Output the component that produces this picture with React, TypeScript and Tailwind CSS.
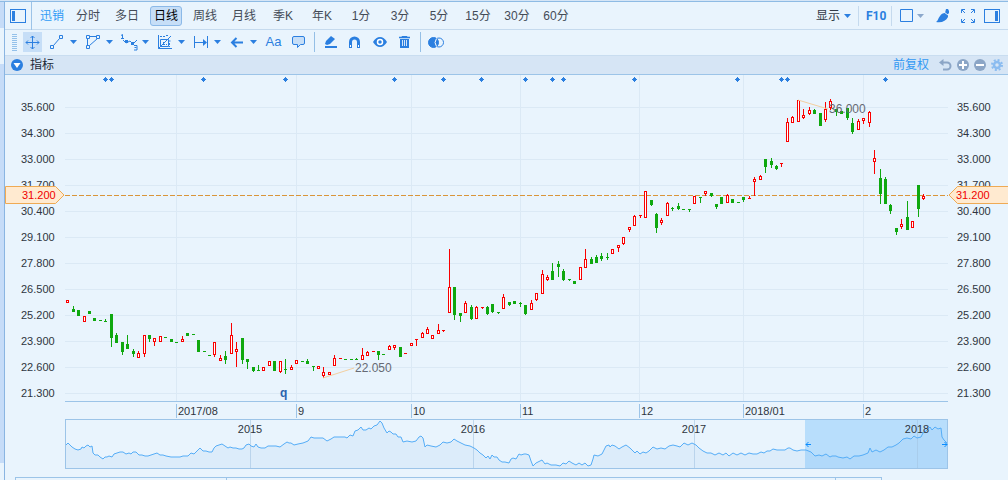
import React from 'react';

type Candle = [kind: 'R' | 'G', high: number, top: number, bottom: number, low: number];

// Daily bars in chart units: direction, high, body top, body bottom, low
const CANDLES: Candle[] = [
  ['R', 300, 300, 303, 303], ['G', 306, 309, 312, 312], ['G', 310, 310, 316, 316], ['R', 316, 316, 322, 322],
  ['G', 311, 311, 314, 314], ['G', 318, 318, 321, 321], ['G', 320, 320, 321, 321], ['G', 319, 321, 322, 322],
  ['G', 314, 314, 338, 347], ['G', 333, 335, 343, 343], ['G', 342, 342, 352, 355], ['G', 335, 344, 349, 349],
  ['G', 349, 351, 354, 357], ['R', 351, 353, 358, 358], ['R', 335, 335, 354, 357], ['G', 335, 335, 339, 342],
  ['R', 338, 338, 342, 346], ['R', 336, 336, 342, 342], ['G', 337, 337, 338, 338], ['G', 339, 339, 342, 342],
  ['G', 342, 342, 343, 343], ['R', 336, 339, 342, 342], ['G', 333, 333, 336, 336], ['G', 334, 334, 335, 335],
  ['G', 340, 340, 352, 352], ['G', 351, 351, 352, 352], ['G', 355, 355, 356, 356], ['R', 342, 342, 355, 357],
  ['R', 355, 358, 361, 361], ['G', 351, 356, 360, 364], ['R', 323, 335, 354, 354], ['R', 342, 349, 352, 367],
  ['G', 338, 338, 360, 364], ['G', 359, 359, 362, 369], ['G', 367, 367, 371, 372], ['G', 365, 370, 371, 371],
  ['R', 367, 367, 371, 371], ['R', 361, 361, 366, 366], ['G', 361, 361, 371, 371], ['R', 361, 361, 372, 373],
  ['G', 359, 369, 370, 374], ['R', 365, 367, 370, 370], ['R', 360, 360, 364, 364], ['G', 361, 361, 362, 362],
  ['G', 359, 361, 364, 364], ['G', 366, 366, 367, 371], ['R', 366, 366, 369, 369], ['R', 367, 372, 376, 378],
  ['R', 372, 372, 375, 375], ['R', 355, 358, 366, 366], ['R', 358, 358, 359, 359], ['G', 359, 359, 360, 360],
  ['G', 359, 359, 360, 360], ['G', 358, 359, 360, 360], ['R', 348, 355, 360, 360], ['R', 351, 352, 356, 356],
  ['R', 351, 351, 352, 352], ['G', 351, 351, 355, 360], ['G', 354, 354, 355, 355], ['R', 345, 346, 350, 350],
  ['R', 345, 345, 348, 350], ['G', 347, 347, 357, 357], ['R', 353, 353, 354, 354], ['R', 343, 343, 346, 346],
  ['R', 339, 339, 340, 346], ['R', 332, 333, 338, 338], ['R', 327, 329, 334, 334], ['R', 335, 335, 339, 339],
  ['R', 324, 330, 334, 334], ['R', 330, 330, 331, 332], ['R', 249, 287, 313, 313], ['G', 287, 287, 315, 320],
  ['G', 313, 313, 316, 322], ['R', 301, 303, 313, 313], ['G', 305, 307, 319, 320], ['R', 306, 307, 319, 319],
  ['R', 307, 307, 308, 309], ['G', 306, 307, 314, 315], ['G', 304, 304, 312, 313], ['G', 312, 312, 313, 314],
  ['R', 294, 297, 309, 309], ['G', 302, 302, 305, 306], ['G', 301, 301, 304, 304], ['G', 302, 303, 304, 307],
  ['G', 305, 305, 314, 315], ['R', 300, 303, 310, 310], ['R', 293, 293, 300, 301], ['R', 270, 274, 294, 294],
  ['R', 275, 277, 280, 281], ['G', 263, 271, 280, 280], ['G', 261, 264, 267, 277], ['G', 269, 271, 280, 281],
  ['G', 279, 279, 280, 281], ['G', 281, 281, 284, 284], ['R', 267, 267, 280, 280], ['R', 249, 259, 268, 268],
  ['G', 257, 259, 264, 264], ['G', 255, 257, 263, 263], ['G', 253, 256, 259, 261], ['G', 253, 257, 258, 260],
  ['R', 249, 249, 254, 254], ['R', 245, 245, 248, 252], ['R', 237, 237, 244, 245], ['R', 227, 227, 230, 232],
  ['R', 215, 216, 226, 226], ['R', 215, 215, 216, 218], ['R', 191, 191, 218, 218], ['G', 200, 200, 205, 206],
  ['G', 213, 214, 228, 233], ['R', 218, 220, 223, 225], ['R', 202, 203, 216, 216], ['G', 207, 208, 209, 211],
  ['G', 203, 206, 209, 210], ['G', 209, 209, 210, 210], ['G', 209, 209, 210, 212], ['R', 196, 196, 204, 204],
  ['G', 197, 197, 198, 203], ['R', 191, 191, 194, 196], ['G', 193, 193, 196, 197], ['G', 204, 204, 207, 209],
  ['G', 197, 197, 204, 204], ['R', 194, 195, 203, 203], ['G', 199, 199, 203, 203], ['G', 202, 202, 203, 203],
  ['G', 197, 197, 200, 202], ['R', 196, 198, 199, 199], ['R', 177, 179, 182, 196], ['R', 175, 176, 180, 180],
  ['G', 159, 159, 167, 173], ['G', 158, 161, 165, 168], ['G', 165, 166, 169, 170], ['R', 163, 163, 164, 167],
  ['R', 118, 122, 142, 142], ['R', 116, 117, 123, 123], ['R', 100, 100, 122, 122], ['R', 109, 115, 118, 119],
  ['R', 107, 110, 114, 115], ['G', 109, 110, 114, 114], ['G', 113, 113, 126, 126], ['R', 102, 109, 120, 122],
  ['R', 99, 101, 108, 110], ['G', 109, 109, 112, 116], ['G', 111, 111, 114, 114], ['G', 108, 108, 118, 120],
  ['G', 118, 123, 132, 134], ['R', 119, 121, 130, 130], ['R', 118, 118, 121, 124], ['R', 111, 112, 123, 127],
  ['R', 150, 158, 162, 174], ['G', 169, 178, 194, 204], ['G', 177, 179, 204, 204], ['G', 204, 205, 211, 214],
  ['G', 228, 228, 232, 235], ['R', 219, 224, 227, 229], ['G', 201, 217, 230, 230], ['R', 221, 221, 228, 228],
  ['G', 185, 185, 209, 217], ['R', 194, 196, 199, 200],
];

const PRICES = ['35.600', '34.300', '33.000', '31.700', '30.400', '29.100', '27.800', '26.500', '25.200', '23.900', '22.600', '21.300'];
const EVENTS = [105, 111, 203, 285, 394, 443, 481, 525, 552, 563, 634, 737, 781, 787, 885];
const PERIODS = ['分时', '多日', '日线', '周线', '月线', '季K', '年K', '1分', '3分', '5分', '15分', '30分', '60分'];

const LEFT = 65;
const WIDTH = 883;

const MONTHS = [
  { label: '2017/08', x: 176 },
  { label: '9', x: 296 },
  { label: '10', x: 411 },
  { label: '11', x: 520 },
  { label: '12', x: 639 },
  { label: '2018/01', x: 743 },
  { label: '2', x: 863 },
];

const YEARS = [
  { label: '2015', x: 250 },
  { label: '2016', x: 473 },
  { label: '2017', x: 694 },
  { label: '2018', x: 917 },
];

const HISTORY =
  '66,445 68,443 70,445 72,447 75,449 78,450 81,449 82,447 84,448 86,446 88,445 90,447 92,446 93,453 95,455 98,455 100,457 103,459 105,457 107,457 109,456 112,457 114,454 117,453 120,452 123,452 126,454 129,453 131,454 133,452 136,452 139,455 142,455 145,456 148,456 151,455 154,454 157,453 160,455 163,455 166,456 171,457 176,457 180,457 183,456 188,456 191,453 194,454 197,451 200,448 203,451 206,451 209,452 212,452 214,448 216,446 219,445 222,444 225,446 228,448 230,447 233,448 236,448 239,449 242,449 244,448 246,445 249,444 251,446 254,447 256,444 258,447 261,448 265,448 268,446 272,446 276,446 280,447 284,444 287,442 289,443 291,443 294,445 298,444 303,443 308,441 311,437 314,438 318,438 323,438 327,441 331,439 334,437 339,437 345,437 347,438 350,435 353,436 355,431 358,430 361,427 363,430 366,430 369,428 371,429 374,426 377,425 380,421 382,423 384,428 387,433 389,431 391,432 393,434 396,434 398,437 401,437 403,442 407,441 412,442 416,441 419,437 421,436 423,438 425,447 427,445 431,446 436,447 440,445 443,442 447,443 451,442 454,439 457,441 461,443 465,445 470,446 474,448 477,450 480,453 483,455 486,458 488,456 490,459 492,455 494,457 497,457 499,460 502,462 505,462 509,463 511,459 513,458 516,459 519,454 521,455 524,454 526,454 529,455 531,461 533,466 536,463 540,461 542,460 545,464 547,463 551,465 556,465 560,466 563,463 566,464 569,461 572,463 576,465 579,463 582,465 585,463 588,466 591,465 593,459 594,455 598,456 602,454 604,450 606,446 609,445 610,447 612,445 615,446 619,449 622,447 626,445 630,448 633,451 635,453 637,451 640,454 643,452 646,453 649,451 653,447 657,449 661,448 665,449 669,446 673,445 677,446 680,447 684,443 688,445 692,443 696,445 699,448 703,451 707,453 711,453 715,455 719,453 723,455 726,453 729,456 733,453 737,455 741,453 745,455 749,453 753,454 757,454 761,452 764,453 767,451 770,451 773,449 777,450 781,450 785,450 788,448 790,448 793,450 797,451 801,450 806,450 811,452 815,456 819,455 822,456 826,454 830,457 832,456 834,456 836,456 838,457 843,458 847,457 850,459 854,456 859,456 863,455 868,453 870,448 872,452 876,450 880,452 884,450 888,447 892,447 896,445 899,443 903,439 907,438 911,439 914,436 917,438 921,437 923,433 926,431 930,427 932,430 935,427 938,429 941,428 942,437 944,440 946,442 947,443';

const pct = (x: number) => `${((x - LEFT) / WIDTH) * 100}%`;
const candleX = (i: number) => Math.round(67.2 + i * 5.452);

const Caret = ({ muted = false }: { muted?: boolean }) => (
  <svg width="7" height="4" viewBox="0 0 7 4" className={muted ? 'shrink-0 text-[#8ba8cc]' : 'shrink-0 text-[#2b7fe0]'}>
    <path d="M0 0h7L3.5 4z" fill="currentColor" />
  </svg>
);

const Glyph = ({ children, size = 18 }: { children: React.ReactNode; size?: number }) => (
  <svg width={size} height={size} viewBox={`0 0 ${size} ${size}`} fill="none" stroke="currentColor" className="shrink-0">
    {children}
  </svg>
);

const PanelIcon = ({ side }: { side: 'left' | 'right' }) => (
  <svg width="16" height="14" viewBox="0 0 16 14" fill="none" className="text-[#2b7fe0]">
    <rect x="0.5" y="0.5" width="15" height="13" stroke="currentColor" />
    <rect x={side === 'left' ? 2 : 11} y="2" width="3" height="10" fill="currentColor" />
  </svg>
);

const DRAW_TOOLS = [
  {
    name: 'Line',
    icon: <path d="M1.5 12.5h3v3h-3zM10.5 2.5h3v3h-3zM4.5 12.5l6-7" />,
  },
  {
    name: 'Polygon',
    icon: <path d="M1.5 2.5h3v3h-3zM11.5 2.5h3v3h-3zM1.5 12.5h3v3h-3zM4.5 3.5h7M2.5 5.5v7M4.5 12.5l8-7" />,
  },
  {
    name: 'Wave',
    icon: (
      <>
        <path d="M0 2.5l1.5-1v4M0 5.5h3M2 7l3 3 4-2 3 3 4-4" />
        <path d="M4 7h3v3H4zM10 9h3v3h-3z" fill="currentColor" stroke="none" />
        <path d="M13 12.5h3v4.500h-3M13.500 14.500h2" />
      </>
    ),
  },
  {
    name: 'Gann',
    icon: (
      <>
        <path d="M1.5 2v13.5H15M3.5 6.5h8v7h-8zM1.5 15.5L14 3" />
        <path d="M3 3.500h5M6 9.500h2M6 11.500h4M11.500 8h3M12.500 10v4M9 2.500h2" strokeDasharray="2 1" />
      </>
    ),
  },
  {
    name: 'Measure',
    icon: (
      <>
        <path d="M1.5 3v12M14.5 3v12M2 9.5h10" />
        <path d="M10 6l4 3.5-4 3.5z" fill="currentColor" stroke="none" />
      </>
    ),
  },
  {
    name: 'Arrow',
    icon: <path d="M14 9.5H3M7.5 5l-4.500 4.500L7.500 14" strokeWidth="2" />,
  },
];

const QuoteBar = () => (
  <header className="flex h-7 items-center border-b border-[#c5daee] text-[#444b57]">
    <button aria-label="Toggle sidebar" className="ml-[5px]"><PanelIcon side="left" /></button>
    <span className="ml-[5px] h-7 w-px bg-[#9cc3e8]" />
    <a href="#quote" className="ml-2 text-[#2f9af5]">迅销</a>
    <nav className="ml-2 flex gap-[7px]">
      {PERIODS.map((period) => (
        <button
          key={period}
          className={
            period === '日线'
              ? 'h-5 w-8 rounded-[3px] border border-[#8bb9e8] bg-[#c6def7] text-black'
              : 'h-5 w-8 whitespace-nowrap'
          }
        >
          {period}
        </button>
      ))}
    </nav>

    <div className="ml-auto flex items-center pr-2 text-[#2b7fe0]">
      <button className="flex items-center gap-1 text-[#333b47]">显示 <Caret /></button>
      <span className="mx-[7px] h-5 w-px bg-[#c5daee]" />
      <button className="w-[19px] font-[Roboto,sans-serif] text-[12px] font-bold">F10</button>
      <span className="ml-[6px] mr-2 h-5 w-px bg-[#c5daee]" />
      <button aria-label="Layout" className="flex items-center gap-1">
        <Glyph size={13}><path d="M.5.5h12v12H.5z" /></Glyph>
        <Caret muted />
      </button>
      <button aria-label="Theme" className="ml-3">
        <Glyph size={14}>
          <path d="M10 0h2l1 2 0 2-1 1v3c-2 4-6 6-12 5 2-1 2-4 4-6 1-2 3-3 5-3z" fill="currentColor" stroke="none" />
          <path d="M8 3l4 3" stroke="#e9f4fd" />
        </Glyph>
      </button>
      <button aria-label="Full screen" className="ml-[11px]">
        <Glyph size={14}>
          <path d="M.5 4V.5H4M1 1l3 3M10 .5h3.5V4M13 1l-3 3M.5 10v3.5H4M1 13l3-3M13.5 10v3.5H10M13 13l-3-3" />
        </Glyph>
      </button>
      <button aria-label="Toggle details" className="ml-[9px]"><PanelIcon side="right" /></button>
    </div>
  </header>
);

const DrawBar = () => (
  <div className="flex h-[26px] items-center border-b border-[#c9ddf0] pb-px text-[#2b7fe0]">
    <svg width="5" height="17" viewBox="0 0 5 17" className="ml-[7px] text-[#94c1ea]">
      <path d="M0 .5h5M0 2.5h5M0 4.5h5M0 6.5h5M0 8.5h5M0 10.5h5M0 12.5h5M0 14.5h5M0 16.5h5" stroke="currentColor" />
    </svg>
    <button aria-label="Move" className="ml-[6px] flex h-5 w-[19px] items-center justify-center bg-[#c6def7]">
      <Glyph size={15}>
        <path d="M7.5 1v13M1 7.5h13M5.5 3l2-2 2 2M5.5 12l2 2 2-2M3 5.5l-2 2 2 2M12 5.5l2 2-2 2" />
      </Glyph>
    </button>
    <div className="ml-[7px] flex">
      {DRAW_TOOLS.map((tool) => (
        <button key={tool.name} aria-label={tool.name} className="flex w-9 items-center gap-[3px]">
          <Glyph>{tool.icon}</Glyph>
          <Caret />
        </button>
      ))}
    </div>
    <button aria-label="Text" className="w-[17px] text-[13px]">Aa</button>
    <button aria-label="Comment" className="ml-[10px]">
      <Glyph size={14}>
        <path d="M2 1.5h9q1.500 0 1.500 1.500v5q0 1.500-1.500 1.500H8.500L5.500 12.500V9.500H2Q.5 9.500.5 8V3Q.5 1.500 2 1.500z" fill="#c6def7" />
      </Glyph>
    </button>
    <span className="ml-2 h-5 w-px bg-[#94bfe6]" />
    <button aria-label="Edit" className="ml-[9px]">
      <Glyph size={14}>
        <path d="M1 9l1-3 5-5 4 3-5 5-3 1z" fill="currentColor" stroke="none" />
        <path d="M1 12h12" strokeWidth="2" />
      </Glyph>
    </button>
    <button aria-label="Magnet" className="ml-[10px]">
      <Glyph size={14}>
        <path d="M2.5 13V7a4 4 0 0 1 8 0v6" strokeWidth="3" />
        <path d="M2 10h1v2H2zM10 10h1v2h-1z" fill="#fff" stroke="none" />
      </Glyph>
    </button>
    <button aria-label="Visibility" className="ml-[11px]">
      <Glyph size={14}>
        <path d="M0 7q3-5 7-5t7 5q-3 5-7 5T0 7z" fill="currentColor" stroke="none" />
        <circle cx="7" cy="7" r="2.5" fill="currentColor" stroke="#fff" strokeWidth="1.5" />
      </Glyph>
    </button>
    <button aria-label="Delete" className="ml-3">
      <Glyph size={12}>
        <path d="M0 1.500h11M3.500 1V.5h4V1" strokeWidth="1.500" />
        <path d="M1 3h9v9H1z" fill="currentColor" stroke="none" />
        <path d="M3.500 4v6M5.500 4v6M7.500 4v6" stroke="#fff" strokeWidth=".8" />
      </Glyph>
    </button>
    <span className="ml-[9px] h-5 w-px bg-[#94bfe6]" />
    <button aria-label="Compare" className="ml-[7px]">
      <Glyph size={17}>
        <circle cx="5.5" cy="8.5" r="5" fill="currentColor" />
        <circle cx="11" cy="8.5" r="4.5" />
        <path d="M8.5 4.5q-3 4 0 8" stroke="#fff" />
      </Glyph>
    </button>
  </div>
);

const IndicatorBar = () => (
  <div className="flex h-[19px] items-center border-b border-[#9cc4e8] bg-[#d6e5f5] text-[#8ba5c6]">
    <button className="ml-[6px] flex items-center gap-[7px] text-[#222a35]">
      <svg width="12" height="12" viewBox="0 0 12 12">
        <circle cx="6" cy="6" r="6" fill="#2b7fe0" />
        <path d="M2.5 4h7L6 9z" fill="#fff" />
      </svg>
      指标
    </button>
    <button className="ml-auto text-[#3299f3]">前复权</button>
    <div className="ml-[10px] flex items-center gap-[5px] pr-[5px]">
      <button aria-label="Undo">
        <Glyph size={13}>
          <path d="M3 3.500h5a3.500 3.500 0 0 1 0 7H4" strokeWidth="2" />
          <path d="M0 3.500L4.500 0v7z" fill="currentColor" stroke="none" />
        </Glyph>
      </button>
      <button aria-label="Zoom in">
        <Glyph size={12}>
          <circle cx="6" cy="6" r="6" fill="currentColor" stroke="none" />
          <path d="M2 6h8M6 2v8" stroke="#fff" strokeWidth="2" />
        </Glyph>
      </button>
      <button aria-label="Zoom out">
        <Glyph size={12}>
          <circle cx="6" cy="6" r="6" fill="currentColor" stroke="none" />
          <path d="M2 6h8" stroke="#fff" strokeWidth="2" />
        </Glyph>
      </button>
      <button aria-label="Settings" className="text-[#8bbcf0]">
        <Glyph size={12}>
          <circle cx="6" cy="6" r="5" strokeWidth="2" strokeDasharray="2 1.93" />
          <circle cx="6" cy="6" r="3" strokeWidth="2.5" />
        </Glyph>
      </button>
    </div>
  </div>
);

const PriceAxis = ({ side }: { side: 'left' | 'right' }) => (
  <div className={`relative w-[60px] shrink-0 pt-[19px] text-[11px] text-[#2e3540] ${side === 'left' ? 'pl-4' : 'pl-[9px]'}`}>
    {PRICES.map((price) => (
      <div key={price} className="h-[26px] leading-[26px]">{price}</div>
    ))}
    <div className="absolute inset-x-0 top-[111px] h-[18px]">
      <svg width="60" height="18" viewBox="0 0 60 18" className="absolute inset-0">
        <path
          d={side === 'left' ? 'M.5.5H50.5L59 9l-8.5 8.5H.5z' : 'M60 .5H9.5L1 9l8.5 8.5H60'}
          fill="#ffead0"
          stroke="#efaa54"
        />
      </svg>
      <span className={`relative block leading-[18px] text-[#f00000] ${side === 'left' ? 'pl-[17px]' : 'pl-2'}`}>31.200</span>
    </div>
  </div>
);

const CandleChart = () => (
  <div className="relative border-b border-[#9cc4e8]">
    <svg viewBox="65 75 883 326" preserveAspectRatio="none" shapeRendering="crispEdges" className="block h-[326px] w-full">
      {PRICES.map((price, i) => (
        <rect key={price} x={65} y={107 + i * 26} width={883} height={1} fill="#dbe9f5" />
      ))}
      {MONTHS.map((m) => (
        <rect key={m.label} x={m.x} y={75} width={1} height={326} fill="#dbe9f5" />
      ))}
      <path d="M65 195.5H948" stroke="#d9953a" strokeDasharray="5 2" />
      {EVENTS.map((x) => (
        <path key={x} d={`M${x} 77h1v1h1v1h1v1h-1v1h-1v1h-1v-1h-1v-1h-1v-1h1v-1h1z`} fill="#2b7fe0" />
      ))}
      {CANDLES.map(([kind, high, top, bottom, low], i) => {
        const x = candleX(i);
        const color = kind === 'R' ? '#fa0000' : '#0fa80f';
        return (
          <g key={i} fill={color}>
            <rect x={x} y={high} width={1} height={low - high} />
            <rect x={x - 1} y={top} width={3} height={bottom - top} />
            {kind === 'R' && bottom - top > 2 && (
              <rect x={x} y={top + 1} width={1} height={bottom - top - 2} fill="#ffffff" />
            )}
          </g>
        );
      })}
      <path d="M323 378L354 368M798 100l30 9" stroke="#f3cfa0" fill="none" shapeRendering="auto" />
    </svg>
    <span className="absolute top-[284px] text-[12px] leading-[18px] text-[#666a74]" style={{ left: pct(355) }}>22.050</span>
    <span className="absolute top-[25px] text-[12px] leading-[18px] text-[#666a74]" style={{ left: pct(829) }}>36.000</span>
    <span className="absolute top-[310px] text-[12px] leading-4 font-bold text-[#2b63ad]" style={{ left: pct(280) }}>q</span>
  </div>
);

const MonthAxis = () => (
  <div className="flex h-[17px] items-center text-[11px] text-[#2e3540]">
    <span className="basis-0" style={{ flexGrow: MONTHS[0].x - LEFT }} />
    {MONTHS.map((m, i) => (
      <div
        key={m.label}
        className="min-w-0 basis-0"
        style={{ flexGrow: (MONTHS[i + 1]?.x ?? LEFT + WIDTH) - m.x }}
      >
        <span className="block h-[14px] border-l border-[#9cc4e8] pl-px leading-[14px]">{m.label}</span>
      </div>
    ))}
  </div>
);

const Navigator = () => (
  <div className="relative">
    <svg viewBox="65 419 883 50" preserveAspectRatio="none" className="block h-[50px] w-full">
      <polygon points={`66,468 ${HISTORY} 947,468`} fill="#dcecfa" />
      <rect x={805} y={419} width={143} height={50} fill="#7cc4fb" fillOpacity="0.45" />
      {YEARS.map((y) => (
        <rect key={y.label} x={y.x} y={420} width={1} height={48} fill="#a4c4e2" fillOpacity="0.6" />
      ))}
      <polyline points={HISTORY} fill="none" stroke="#55adf7" />
      <rect x={65.5} y={419.5} width={882} height={49} fill="none" stroke="#9cc4e8" />
      <path
        d="M811 444.5h-5M808.5 442l-2.5 2.5 2.5 2.5M942 444.5h5M944.5 442l2.5 2.5-2.5 2.5"
        stroke="#0a8cff"
        fill="none"
      />
    </svg>
    {YEARS.map((y) => (
      <span
        key={y.label}
        className="absolute top-[3px] -translate-x-1/2 text-[11px] leading-[14px] text-[#2e3540]"
        style={{ left: pct(y.x) }}
      >
        {y.label}
      </span>
    ))}
  </div>
);

export default function App() {
  return (
    <div className="flex min-h-screen flex-col bg-[#e9f4fd] font-['Liberation_Sans','Noto_Sans_CJK_SC',sans-serif] text-[12px]">
      <div className="h-[2px] border-b border-[#8ebbe4] bg-[#d5e5f6]" />
      <div className="flex flex-1">
        <aside className="flex w-[5px] shrink-0 flex-col border-r border-[#8ab5e2]">
          <div className="h-[26px] bg-[#c6dcf8]" />
          <div className="mt-9 h-[399px] bg-[#c6dcf8]" />
        </aside>
        <main className="flex min-w-0 flex-1 flex-col">
          <QuoteBar />
          <DrawBar />
          <IndicatorBar />
          <div className="flex">
            <PriceAxis side="left" />
            <div className="min-w-0 flex-1">
              <CandleChart />
              <MonthAxis />
              <Navigator />
            </div>
            <PriceAxis side="right" />
          </div>
          <div className="mt-2 mr-[126px] ml-[10px] flex flex-1 border border-b-0 border-[#9cc4e8]">
            <div className="w-[211px] border-r border-[#9cc4e8]" />
            <div className="ml-auto w-[46px] border-l border-[#9cc4e8]" />
          </div>
        </main>
      </div>
    </div>
  );
}
